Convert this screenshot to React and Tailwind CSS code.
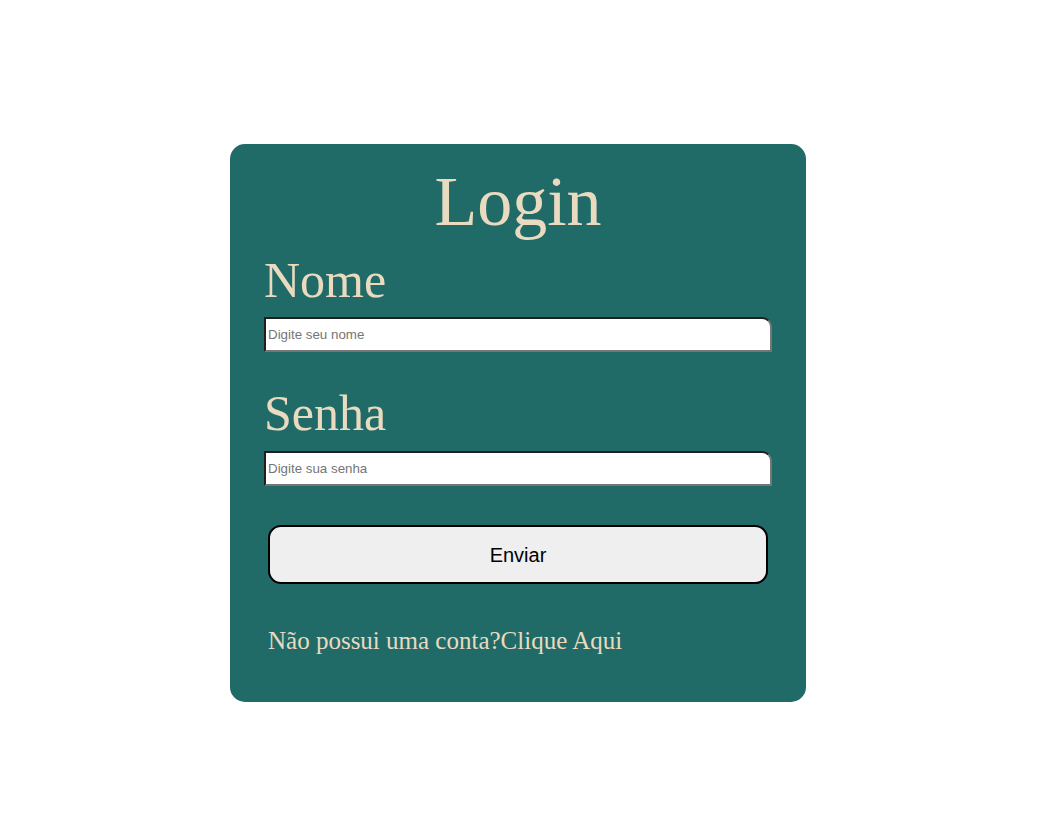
export default function App() {
  return (
    <div className="min-h-screen bg-white pt-[144px] pl-[230px]">
      <div
        className="w-[576px] h-[558px] rounded-[15px] bg-[#206b67] px-[34px] pt-[18px] flex flex-col"
        style={{ fontFamily: '"Liberation Serif", "Times New Roman", serif' }}
      >
        <h1 className="text-center text-[70px] leading-[80px] text-[#e9dac0] font-normal">Login</h1>
        <label className="mt-[10px] text-[50px] leading-[56px] text-[#e9dac0]">Nome</label>
        <input
          type="text"
          placeholder="Digite seu nome"
          className="mt-[9px] h-[35px] w-full bg-white px-[2px] py-[1px] text-[13.333px] border-2 border-solid border-t-[#1f1f1f] border-l-[#1f1f1f] border-r-[#767676] border-b-[#767676] rounded-tr-[10px] placeholder:text-[#757575] outline-none"
          style={{ fontFamily: '"Liberation Sans", Arial, sans-serif' }}
        />
        <label className="mt-[33px] text-[50px] leading-[56px] text-[#e9dac0]">Senha</label>
        <input
          type="password"
          placeholder="Digite sua senha"
          className="mt-[10px] h-[35px] w-full bg-white px-[2px] py-[1px] text-[13.333px] border-2 border-solid border-t-[#1f1f1f] border-l-[#1f1f1f] border-r-[#767676] border-b-[#767676] rounded-tr-[10px] placeholder:text-[#757575] outline-none"
          style={{ fontFamily: '"Liberation Sans", Arial, sans-serif' }}
        />
        <button
          className="mt-[39px] mx-[4px] h-[59px] rounded-[13px] border-2 border-solid border-black bg-[#efefef] text-[20px] text-black"
          style={{ fontFamily: '"Liberation Sans", Arial, sans-serif' }}
        >
          Enviar
        </button>
        <p className="mt-[42px] ml-[4px] text-[25px] leading-[30px] text-[#e9dac0]">
          Não possui uma conta?<a href="#" className="text-[#e9dac0]">Clique Aqui</a>
        </p>
      </div>
    </div>
  );
}
